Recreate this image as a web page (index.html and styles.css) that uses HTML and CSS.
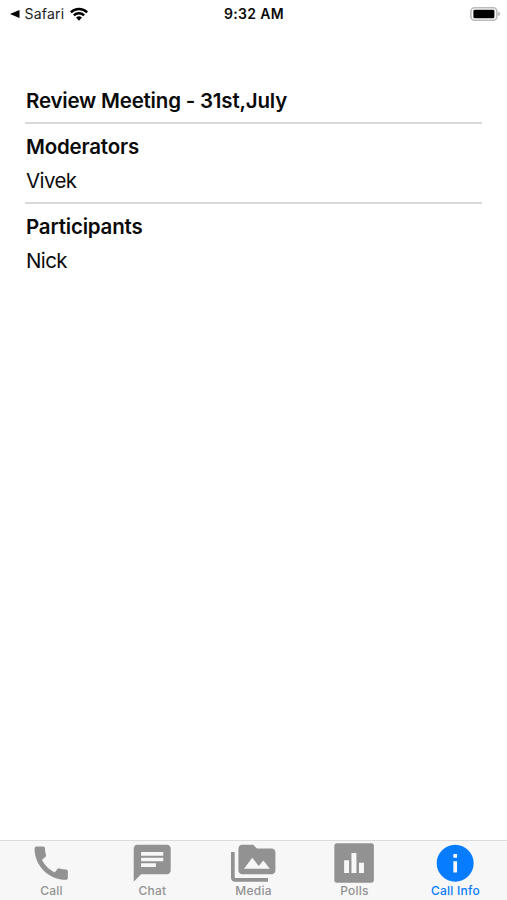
FILE: index.html
```html
<!DOCTYPE html>
<html lang="en">
<head>
<meta charset="utf-8">
<meta name="viewport" content="width=device-width, initial-scale=1">
<title>Call Info</title>
<link rel="stylesheet" href="styles.css">
</head>
<body>
<header class="status">
  <div class="status-left">
    <svg class="back" viewBox="0 0 10 8"><path d="M0 4 9.5 0v8z"/></svg>
    <span class="app">Safari</span>
    <svg class="wifi" viewBox="0 0 18 14"><path d="M0 4.4a13 13 0 0 1 18 0l-1.7 1.9a10.4 10.4 0 0 0-14.6 0zM3 7.5a8.6 8.6 0 0 1 12 0l-1.7 1.8a6.2 6.2 0 0 0-8.6 0zM6 10.6a4.4 4.4 0 0 1 6 0l-3 3.1z"/></svg>
  </div>
  <span class="clock">9:32 AM</span>
  <div class="status-right">
    <svg class="battery" viewBox="0 0 31 14"><rect x=".9" y=".8" width="26" height="12.4" rx="3.8" fill="#fff" stroke="#bbb" stroke-width="1.6"/><rect x="3.4" y="2.7" width="21" height="8.6" rx="1.4"/><path d="M28.3 4.8c2.2.8 2.2 3.6 0 4.4z" fill="#aaa"/></svg>
  </div>
</header>
<main class="content">
  <section class="group"><h1 class="heading title">Review Meeting - 31st,July</h1></section>
  <section class="group">
    <h2 class="heading">Moderators</h2>
    <p class="person">Vivek</p>
  </section>
  <section class="group">
    <h2 class="heading">Participants</h2>
    <p class="person">Nick</p>
  </section>
</main>
<nav class="tabs">
  <a class="tab"><svg class="icon" viewBox="0 0 24 24"><path d="M20.01 15.38c-1.23 0-2.42-.2-3.53-.56-.35-.12-.74-.03-1.01.24l-1.57 1.97c-2.83-1.35-5.48-3.9-6.89-6.83l1.95-1.66c.27-.28.35-.67.24-1.02-.37-1.11-.56-2.3-.56-3.53 0-.54-.45-.99-.99-.99H4.19C3.65 3 3 3.24 3 3.99 3 13.28 10.73 21 20.01 21c.71 0 .99-.63.99-1.18v-3.45c0-.54-.45-.99-.99-.99z"/></svg><span class="label">Call</span></a>
  <a class="tab"><svg class="icon" viewBox="0 0 24 24"><path d="M20 2H4c-1.1 0-1.99.9-1.99 2L2 22l4-4h14c1.1 0 2-.9 2-2V4c0-1.1-.9-2-2-2zM6 9h12v2H6V9zm8 5H6v-2h8v2zm4-6H6V6h12v2z"/></svg><span class="label">Chat</span></a>
  <a class="tab"><svg class="icon" viewBox="0 0 24 24"><path d="M2 6H0v14c0 1.1.9 2 2 2h18v-2H2V6zm20-2h-8l-2-2H6c-1.1 0-1.99.9-1.99 2L4 16c0 1.1.9 2 2 2h16c1.1 0 2-.9 2-2V6c0-1.1-.9-2-2-2zM7 15l4.5-6 3.5 4.51 2.5-3.01L21 15H7z"/></svg><span class="label">Media</span></a>
  <a class="tab"><svg class="icon" viewBox="0 0 44 44"><rect x="2.3" y="2.3" width="39.2" height="39" rx="2.6"/><path d="M12 19h4.9v12.6H12zM19.3 11.8h4.9v19.8h-4.9zM26.8 21.6h4.9v10h-4.9z" fill="#f7f7f7"/></svg><span class="label">Polls</span></a>
  <a class="tab active"><svg class="icon" viewBox="0 0 24 24"><path d="M12 2C6.48 2 2 6.48 2 12s4.48 10 10 10 10-4.48 10-10S17.52 2 12 2zm1 15h-2v-6h2v6zm0-8h-2V7h2v2z"/></svg><span class="label">Call Info</span></a>
</nav>
</body>
</html>
```
FILE: styles.css
```css
* { box-sizing: border-box; margin: 0; padding: 0; }
body {
  display: flex;
  flex-direction: column;
  height: 900px;
  background: #fff;
  color: #0b0b0b;
  font-family: Inter, "Liberation Sans", sans-serif;
}
svg { display: block; flex: none; }
.status {
  display: grid;
  grid-template-columns: 1fr auto 1fr;
  align-items: center;
  height: 28px;
  padding: 0 6px 0 10px;
  font-size: 14px;
  line-height: 18px;
}
.status-left { display: flex; align-items: center; }
.back { width: 10px; height: 8px; }
.app { margin-left: 4.5px; width: 40px; letter-spacing: .2px; color: #222; white-space: nowrap; }
.wifi { width: 18px; height: 14px; margin-left: 5.5px; margin-top: -1px; }
.clock { margin-left: -3px; font-weight: 600; letter-spacing: .35px; }
.status-right { display: flex; justify-content: flex-end; }
.battery { width: 31px; height: 14px; margin-top: -1px; }
.content { flex: 1; padding: 55px 25px 0; }
.group + .group { border-top: 2px solid #d9d9d9; padding-top: 5px; }
.heading, .person { padding-left: 1px; font-size: 20.5px; }
.heading { line-height: 35px; font-weight: 600; letter-spacing: -.2px; }
.person { padding-bottom: 4px; line-height: 34px; font-weight: 400; letter-spacing: -.6px; }
.title { padding-bottom: 4px; }
.tabs {
  display: grid;
  grid-template-columns: repeat(5, 1fr);
  height: 60px;
  padding: 0 1px;
  border-top: 1px solid #dcdcdc;
  background: #f7f7f7;
}
.tab {
  display: flex;
  flex-direction: column;
  align-items: center;
  padding-top: .4px;
  color: #929292;
  fill: currentColor;
}
.icon { width: 44.4px; height: 44.4px; }
.label { font-size: 12px; line-height: 14px; margin-top: -1.4px; font-weight: 500; letter-spacing: .25px; }
.active { color: #087cff; }
```
